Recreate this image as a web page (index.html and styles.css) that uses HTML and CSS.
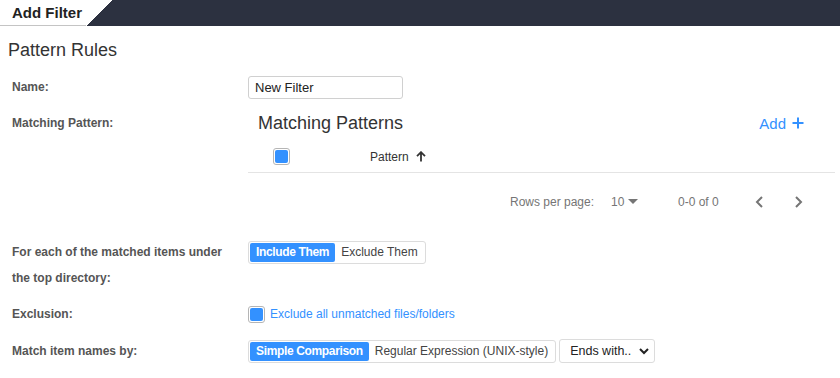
FILE: index.html
```html
<!DOCTYPE html>
<html>
<head>
<meta charset="utf-8">
<link rel="stylesheet" href="styles.css">
</head>
<body>
<div class="topbar">
  <div class="tab">Add Filter</div>
  <div class="slant"></div>
  <div class="bar-fill"></div>
</div>
<h2 class="section-title">Pattern Rules</h2>
<div class="form">
  <div class="row row-name">
    <div class="label">Name:</div>
    <div class="value"><div class="text-input">New Filter</div></div>
  </div>
  <div class="row row-pattern">
    <div class="label lh28">Matching Pattern:</div>
    <div class="value table">
      <div class="table-head">
        <div class="table-title">Matching Patterns</div>
        <div class="add-btn">Add
          <svg width="12" height="12" viewBox="0 0 12 12"><path d="M6 0.5V11.5M0.5 6H11.5" stroke="#3391ff" stroke-width="2" fill="none"/></svg>
        </div>
      </div>
      <div class="col-head">
        <div class="cb-cell"><span class="checkbox"><span class="checkbox-fill"></span></span></div>
        <div class="col-pattern">Pattern
          <svg width="10" height="11" viewBox="0 0 10 11"><path d="M5 10.5V1.5M1 5.2L5 1.2L9 5.2" stroke="#333" stroke-width="1.8" fill="none"/></svg>
        </div>
      </div>
      <div class="pager">
        <span class="rows-label">Rows per page:</span>
        <span class="rows-select">10
          <svg width="10" height="5" viewBox="0 0 10 5"><path d="M0 0H10L5 5Z" fill="#757575"/></svg>
        </span>
        <span class="range">0-0 of 0</span>
        <span class="nav"><svg width="8" height="12" viewBox="0 0 8 12"><path d="M7 1L2 6L7 11" stroke="#757575" stroke-width="2" fill="none"/></svg></span>
        <span class="nav"><svg width="8" height="12" viewBox="0 0 8 12"><path d="M1 1L6 6L1 11" stroke="#757575" stroke-width="2" fill="none"/></svg></span>
      </div>
    </div>
  </div>
  <div class="row row-each">
    <div class="label lh26">For each of the matched items under<br>the top directory:</div>
    <div class="value"><div class="segmented seg-top"><span class="seg active">Include Them</span><span class="seg">Exclude Them</span></div></div>
  </div>
  <div class="row row-excl">
    <div class="label lh26">Exclusion:</div>
    <div class="value excl"><span class="checkbox"><span class="checkbox-fill"></span></span><span class="excl-text">Exclude all unmatched files/folders</span></div>
  </div>
  <div class="row row-match">
    <div class="label lh26">Match item names by:</div>
    <div class="value match">
      <div class="segmented"><span class="seg active">Simple Comparison</span><span class="seg">Regular Expression (UNIX-style)</span></div>
      <div class="select">Ends with..
        <svg width="10" height="7" viewBox="0 0 10 7"><path d="M1 1L5 5L9 1" stroke="#222" stroke-width="2" fill="none"/></svg>
      </div>
    </div>
  </div>
</div>
</body>
</html>
```
FILE: styles.css
```css
* { box-sizing: border-box; }
body {
  margin: 0;
  font-family: "Liberation Sans", Arial, sans-serif;
  color: #333;
  background: #fff;
}
.topbar {
  display: flex;
  height: 26px;
}
.tab {
  width: 86px;
  height: 26px;
  padding-left: 12px;
  font-weight: bold;
  font-size: 15px;
  line-height: 25px;
  color: #222;
  border-bottom: 1px solid #c4c4c4;
  background: #fff;
}
.slant {
  width: 26px;
  height: 26px;
  background: linear-gradient(to bottom right, #fff 50%, #2c3140 50%);
}
.bar-fill {
  flex: 1;
  background: #2c3140;
}
.section-title {
  margin: 13px 0 0 8px;
  font-size: 18px;
  line-height: 22px;
  font-weight: normal;
  color: #333;
}
.form {
  padding-left: 12px;
  padding-top: 15px;
}
.row {
  display: flex;
  align-items: flex-start;
}
.label {
  width: 236px;
  flex: none;
  font-size: 12px;
  font-weight: bold;
  color: #555;
  line-height: 23px;
}
.lh28 { line-height: 28px; }
.lh26 { line-height: 26px; }
.value { flex: 1; }
.text-input {
  width: 155px;
  height: 23px;
  border: 1px solid #d0d0d0;
  border-radius: 3px;
  padding-left: 6px;
  font-size: 13px;
  line-height: 21px;
  color: #222;
}
.row-pattern { margin-top: 10px; }
.table { margin-right: 19px; }
.table-head {
  display: flex;
  align-items: center;
  justify-content: space-between;
  height: 28px;
  padding-left: 10px;
  padding-right: 31px;
}
.table-title {
  font-size: 18px;
  color: #333;
}
.add-btn {
  display: flex;
  align-items: center;
  gap: 6px;
  font-size: 15px;
  color: #3391ff;
}
.col-head {
  display: flex;
  align-items: center;
  height: 36px;
  padding-top: 4px;
  border-bottom: 1px solid #e4e4e4;
}
.cb-cell {
  width: 122px;
  padding-left: 25px;
  display: flex;
}
.checkbox {
  display: inline-flex;
  width: 17px;
  height: 17px;
  border: 1px solid #b5b5b5;
  border-radius: 3px;
  padding: 1px;
  flex: none;
}
.checkbox-fill {
  flex: 1;
  background: #3391ff;
  border-radius: 2px;
}
.col-pattern {
  display: flex;
  align-items: center;
  gap: 7px;
  font-size: 12px;
  color: #333;
}
.pager {
  display: flex;
  align-items: center;
  height: 57px;
  padding-left: 262px;
  font-size: 12px;
  color: #757575;
}
.rows-label { width: 101px; }
.rows-select {
  display: flex;
  align-items: center;
  gap: 4px;
  width: 67px;
}
.range { width: 77px; }
.nav {
  display: flex;
  width: 40px;
}
.row-each { margin-top: 9px; }
.segmented {
  display: inline-flex;
  border: 1px solid #dcdcdc;
  border-radius: 3px;
  padding: 1px;
  height: 23px;
}
.seg-top { margin-top: 2px; }
.seg {
  font-size: 12px;
  line-height: 19px;
  padding: 0 6px;
  color: #444;
  border-radius: 2px;
}
.seg.active {
  background: #3391ff;
  color: #fff;
  font-weight: bold;
  letter-spacing: -0.35px;
}
.row-excl { margin-top: 10px; }
.excl {
  display: flex;
  align-items: center;
  height: 26px;
  gap: 5px;
}
.excl-text {
  font-size: 12px;
  color: #3391ff;
}
.row-match { margin-top: 11px; }
.match {
  display: flex;
  align-items: center;
  gap: 3px;
  height: 26px;
}
.select {
  display: flex;
  align-items: center;
  justify-content: space-between;
  width: 96px;
  height: 24px;
  border: 1px solid #dcdcdc;
  border-radius: 3px;
  padding: 0 5px 0 10px;
  font-size: 12.5px;
  color: #222;
}
```
